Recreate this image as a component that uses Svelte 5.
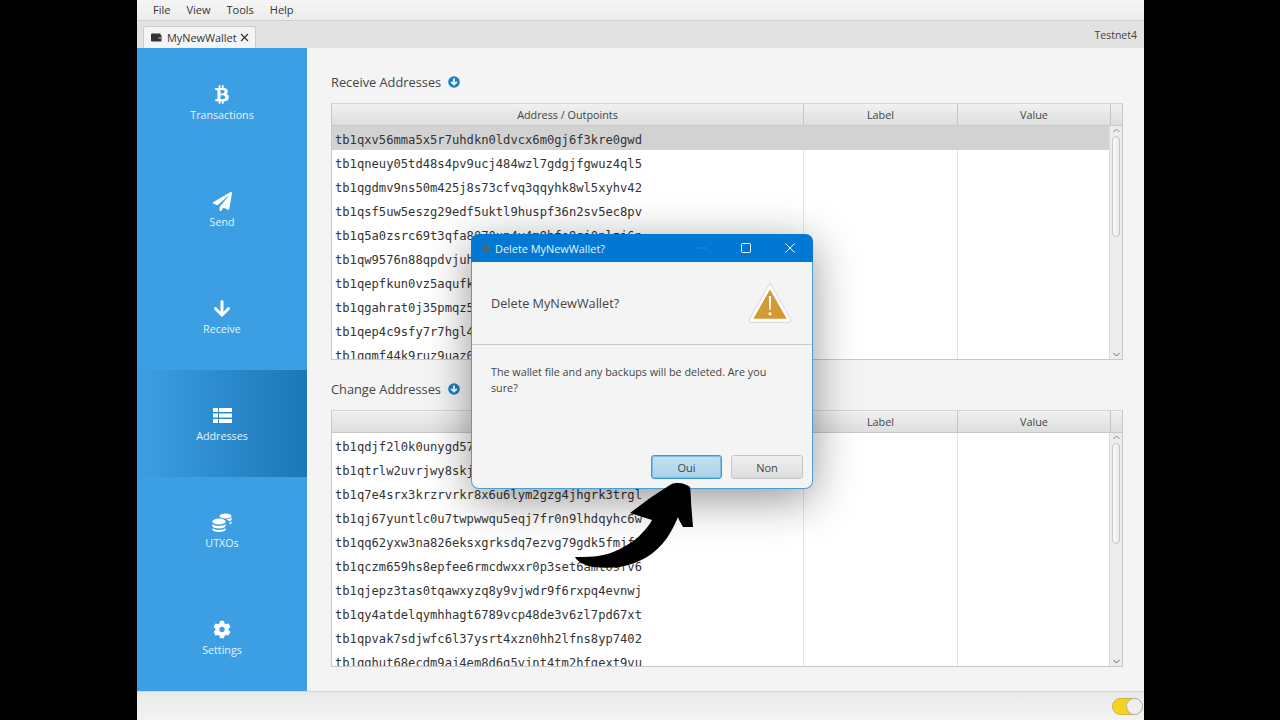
<script lang="ts">
  const menus = ['File', 'View', 'Tools', 'Help'];

  const btc = 'M310.204 242.638c27.73-14.18 45.377-39.39 41.28-81.3-5.358-57.351-52.458-76.573-114.85-81.929V0h-48.528v77.203c-12.605 0-25.525.315-38.444.63V0h-48.528v79.409c-17.842.539-38.622.276-97.37 0v51.678c38.314-.678 58.417-3.14 63.023 21.427v217.429c-2.925 19.492-18.524 16.685-53.255 16.071L3.765 443.68c88.481 0 97.37.315 97.37.315V512h48.528v-67.06c13.234.315 26.154.315 38.444.315V512h48.528v-68.005c81.299-4.412 135.647-24.894 142.895-101.467 5.671-61.446-23.32-88.862-69.326-99.89zM150.608 134.553c27.415 0 113.126-8.507 113.126 48.528 0 54.515-85.71 48.212-113.126 48.212v-96.74zm0 251.776V279.821c32.772 0 133.127-9.138 133.127 53.255-.001 60.186-100.355 53.253-133.127 53.253z';
  const plane = 'M476 3.2L12.5 270.6c-18.1 10.4-15.8 35.6 2.2 43.2L121 358.4l287.3-253.2c5.5-4.9 13.3 2.6 8.6 8.3L176 407v80.5c0 23.6 28.5 32.9 42.5 15.8L282 426l124.6 52.2c14.2 6 30.4-2.9 33-18.2l72-432C515 7.8 493.3-6.8 476 3.2z';
  const down = 'M413.1 222.5l22.2 22.2c9.4 9.4 9.4 24.6 0 33.9L241 473c-9.4 9.4-24.6 9.4-33.9 0L12.7 278.6c-9.4-9.4-9.4-24.6 0-33.9l22.2-22.2c9.5-9.5 25-9.3 34.3.4L184 343.4V56c0-13.3 10.7-24 24-24h32c13.3 0 24 10.7 24 24v287.4l114.8-120.5c9.3-9.8 24.8-10 34.3-.4z';
  const cog = 'M487.4 315.7l-42.6-24.6c4.3-23.2 4.3-47 0-70.2l42.6-24.6c4.9-2.8 7.1-8.6 5.5-14-11.1-35.6-30-67.8-54.7-94.6-3.8-4.1-10-5.1-14.8-2.3L380.8 110c-17.9-15.4-38.5-27.3-60.8-35.1V25.8c0-5.6-3.9-10.5-9.4-11.7-36.7-8.2-74.3-7.8-109.2 0-5.5 1.2-9.4 6.1-9.4 11.7V75c-22.2 7.9-42.8 19.8-60.8 35.1L88.7 85.5c-4.9-2.8-11-1.9-14.8 2.3-24.7 26.7-43.6 58.9-54.7 94.6-1.7 5.4.6 11.2 5.5 14L67.3 221c-4.3 23.2-4.3 47 0 70.2l-42.6 24.6c-4.9 2.8-7.1 8.6-5.5 14 11.1 35.6 30 67.8 54.7 94.6 3.8 4.1 10 5.1 14.8 2.3l42.6-24.6c17.9 15.4 38.5 27.3 60.8 35.1v49.2c0 5.6 3.9 10.5 9.4 11.7 36.7 8.2 74.3 7.8 109.2 0 5.5-1.2 9.4-6.1 9.4-11.7v-49.2c22.2-7.9 42.8-19.8 60.8-35.1l42.6 24.6c4.9 2.8 11 1.9 14.8-2.3 24.7-26.7 43.6-58.9 54.7-94.6 1.5-5.5-.7-11.3-5.6-14.1zM256 336c-44.1 0-80-35.9-80-80s35.9-80 80-80 80 35.9 80 80-35.9 80-80 80z';

  const nav = [
    { label: 'Transactions', icon: 'btc' },
    { label: 'Send', icon: 'send' },
    { label: 'Receive', icon: 'receive' },
    { label: 'Addresses', icon: 'addresses', active: true },
    { label: 'UTXOs', icon: 'utxos' },
    { label: 'Settings', icon: 'settings' }
  ];

  const receive = [
    'tb1qxv56mma5x5r7uhdkn0ldvcx6m0gj6f3kre0gwd',
    'tb1qneuy05td48s4pv9ucj484wzl7gdgjfgwuz4ql5',
    'tb1qgdmv9ns50m425j8s73cfvq3qqyhk8wl5xyhv42',
    'tb1qsf5uw5eszg29edf5uktl9huspf36n2sv5ec8pv',
    'tb1q5a0zsrc69t3qfa8070un4v4m9hfe9qj0nlzj6n',
    'tb1qw9576n88qpdvjuh3k7s2ld0xm4tq8ye5rfa6gc',
    'tb1qepfkun0vz5aqufk7h3wd9xs2ml4cj8ty6rn0pe',
    'tb1qgahrat0j35pmqz5v8dk2xw7fy4ls9nc6ue3t0h',
    'tb1qep4c9sfy7r7hgl4m2xa5dk8vz0tn3wuj6qs9ry',
    'tb1qgmf44k9ruz9uaz0c7xd3pl5wt8hn2vy6es4jfk'
  ];

  const change = [
    'tb1qdjf2l0k0unygd57x3hr8cw5m9ta2ep4vsz6qnl',
    'tb1qtrlw2uvrjwy8skj4d7fn0xa3m5hc9ge6pt2yzq',
    'tb1q7e4srx3krzrvrkr8x6u6lym2gzg4jhgrk3trgl',
    'tb1qj67yuntlc0u7twpwwqu5eqj7fr0n9lhdqyhc6w',
    'tb1qq62yxw3na826eksxgrksdq7ezvg79gdk5fmjf2',
    'tb1qczm659hs8epfee6rmcdwxxr0p3set6amt09fv6',
    'tb1qjepz3tas0tqawxyzq8y9vjwdr9f6rxpq4evnwj',
    'tb1qy4atdelqymhhagt6789vcp48de3v6zl7pd67xt',
    'tb1qpvak7sdjwfc6l37ysrt4xzn0hh2lfns8yp7402',
    'tb1qghut68ecdm9aj4em8d6g5vjnt4tm2hfgext9vu'
  ];

  const sections = [
    { title: 'Receive Addresses', rows: receive, selected: 0 },
    { title: 'Change Addresses', rows: change, selected: -1 }
  ];
</script>

<div class="screen">
  <div class="window">
    <nav class="menubar">
      {#each menus as menu}
        <span>{menu}</span>
      {/each}
    </nav>

    <div class="tabbar">
      <div class="tab">
        <svg class="wallet" width="11" height="11" viewBox="0 0 11 11">
          <path d="M1 1.5h8.5v1.5h1v6.5h-9.5a1 1 0 0 1-1-1v-6a1 1 0 0 1 1-1z" fill="#333" />
          <rect x="7.500" y="5" width="3" height="2" fill="#888" />
        </svg>
        <span>MyNewWallet</span>
        <svg class="tab-close" width="9" height="9" viewBox="0 0 9 9">
          <path d="M1 1l7 7M8 1L1 8" stroke="#333" stroke-width="1.200" fill="none" />
        </svg>
      </div>
      <span class="network">Testnet4</span>
    </div>

    <div class="main">
      <aside class="sidebar">
        {#each nav as item}
          <div class="nav-item" class:active={item.active}>
            {#if item.icon === 'btc'}
              <svg width="14" height="18" viewBox="0 0 384 512"><path d={btc} fill="#fff" /></svg>
            {:else if item.icon === 'send'}
              <svg width="19" height="19" viewBox="0 0 512 512"><path d={plane} fill="#fff" /></svg>
            {:else if item.icon === 'receive'}
              <svg width="18" height="18" viewBox="0 0 448 512"><path d={down} fill="#fff" /></svg>
            {:else if item.icon === 'addresses'}
              <svg width="19" height="18" viewBox="0 0 19 15">
                <path d="M0 0h5v4H0zM6 0h13v4H6zM0 5.5h5v4H0zM6 5.5h13v4H6zM0 11h5v4H0zM6 11h13v4H6z" fill="#fff" />
              </svg>
            {:else if item.icon === 'utxos'}
              <svg width="20" height="19" viewBox="0 0 20 19">
                <g fill="#fff">
                  <ellipse cx="13.500" cy="3" rx="6" ry="2.500" />
                  <path d="M14 6.2c2.5 0 4.5-.6 5.6-1.6v1.8c0 .8-1 1.5-2.6 1.9-.5-1-1.6-1.7-3-2.1zM17.6 9.5c1-.4 1.9-.9 2-1.5v1.8c0 .6-.8 1.2-2 1.6z" />
                  <ellipse cx="7" cy="8.500" rx="6.600" ry="3" />
                  <path d="M.4 11c1 1.2 3.600 2 6.600 2s5.600-.8 6.600-2v2c0 1.200-3 2.400-6.600 2.400S.4 14.200.4 13zM.4 15c1 1.200 3.600 2 6.600 2s5.600-.8 6.600-2v1.500C13.600 17.800 10.600 19 7 19S.4 17.800.4 16.500z" />
                </g>
              </svg>
            {:else}
              <svg width="18" height="18" viewBox="0 0 512 512"><path d={cog} fill="#fff" /></svg>
            {/if}
            <span>{item.label}</span>
          </div>
        {/each}
      </aside>

      <section class="content">
        {#each sections as section}
          <div class="section">
            <h2>
              {section.title}
              <svg width="12" height="12" viewBox="0 0 12 12">
                <circle cx="6" cy="6" r="5.800" fill="#1b7fcc" />
                <path d="M6 2.500v6M3.200 5.800L6 8.600l2.800-2.800" stroke="#fff" stroke-width="1.800" fill="none" />
              </svg>
            </h2>
            <div class="table">
              <div class="thead">
                <div>Address / Outpoints</div>
                <div>Label</div>
                <div>Value</div>
                <div></div>
              </div>
              <div class="tbody">
                <div class="rows">
                  {#each section.rows as row, i}
                    <div class="row" class:selected={i === section.selected}>
                      <div class="addr">{row}</div>
                      <div></div>
                      <div></div>
                    </div>
                  {/each}
                </div>
                <div class="scrollbar">
                  <svg width="13" height="10" viewBox="0 0 13 10"><path d="M3.500 6l3-3 3 3" stroke="#8a8a8a" fill="none" /></svg>
                  <div class="track"><div class="thumb"></div></div>
                  <svg width="13" height="10" viewBox="0 0 13 10"><path d="M3.500 4l3 3 3-3" stroke="#666" fill="none" /></svg>
                </div>
              </div>
            </div>
          </div>
        {/each}
      </section>
    </div>

    <footer class="statusbar">
      <div class="toggle"><div class="knob"></div></div>
    </footer>
  </div>

  <div class="dialog">
    <header class="dialog-title">
      <svg width="12" height="13" viewBox="0 0 14 14">
        <path d="M1 2l4 2.500L6.500 1 8 5l5-1-3 3.500L11.500 11 8 9.500 6 13.500 5 9 2 10l2-3.500z" fill="#56656f" />
      </svg>
      <span>Delete MyNewWallet?</span>
      <div class="controls">
        <svg width="12" height="12" viewBox="0 0 12 12"><path d="M1 6h10" stroke="#2a8bd8" /></svg>
        <svg width="12" height="12" viewBox="0 0 12 12"><rect x="1.500" y="1.500" width="9" height="9" rx="1" stroke="#fff" fill="none" /></svg>
        <svg width="12" height="12" viewBox="0 0 12 12"><path d="M1.500 1.500l9 9M10.500 1.500l-9 9" stroke="#fff" fill="none" /></svg>
      </div>
    </header>
    <div class="dialog-head">
      <span>Delete MyNewWallet?</span>
      <svg width="44" height="42" viewBox="0 0 44 42">
        <path d="M22 4L40.500 36.500a1.500 1.500 0 0 1-1.300 2H4.800a1.500 1.500 0 0 1-1.300-2z" fill="#d39a33" stroke="#fff" stroke-width="3.500" stroke-linejoin="round" />
        <path d="M22 1L42.500 37a2.200 2.200 0 0 1-2 3.400H3.500a2.200 2.200 0 0 1-2-3.400z" fill="none" stroke="#cfcfcf" stroke-width=".8" stroke-linejoin="round" />
        <path d="M20.800 14h2.400l-.5 14h-1.400zM20.700 30.500h2.600v2.800h-2.600z" fill="#fff" />
      </svg>
    </div>
    <div class="dialog-body">
      <p>The wallet file and any backups will be deleted. Are you sure?</p>
      <div class="buttons">
        <button class="oui">Oui</button>
        <button class="non">Non</button>
      </div>
    </div>
  </div>

  <svg class="arrow" width="130" height="90" viewBox="570 480 130 90">
    <path d="M575 557C585 557 595 557 603 555C613 553 620 549 627 545C634 541 639 537 643 532C647 528 650 524 652 520L630 513L650 498L670 485C673 483 676 483 678 483C683 483 687 485 690 487C691 495 691 500 691 502L693 527L683 527C681 524 679 520 678 517C675 524 671 532 667 538C662 545 655 552 647 557C638 562 630 565 620 567C611 568 602 568 593 567C587 566 583 564 580 562C578 561 576 559 575 557Z" fill="#000" />
  </svg>
</div>

<style>
  :global(body) {
    background: #000;
  }

  .screen {
    position: relative;
    display: flex;
    width: 1280px;
    height: 720px;
    padding: 0 136px 0 137px;
    box-sizing: border-box;
    background: #000;
    overflow: hidden;
    font-family: "Open Sans", "Noto Sans", sans-serif;
    color: #333;
  }

  .window {
    flex: 1;
    display: flex;
    flex-direction: column;
    background: #f4f4f4;
    min-width: 0;
  }

  .menubar {
    height: 21px;
    flex: none;
    display: flex;
    align-items: center;
    gap: 16px;
    padding: 0 0 2px 16px;
    box-sizing: border-box;
    font-size: 11px;
    background: linear-gradient(#f5f5f5, #ececec);
    border-bottom: 1px solid #cfcfcf;
  }

  .tabbar {
    height: 27px;
    flex: none;
    display: flex;
    align-items: flex-end;
    justify-content: space-between;
    padding: 0 7px 0 6px;
    box-sizing: border-box;
    background: #e2e2e2;
  }

  .tab {
    width: 113px;
    height: 22px;
    display: flex;
    align-items: center;
    gap: 5px;
    padding-left: 7px;
    box-sizing: border-box;
    font-size: 10.900px;
    background: #f4f4f4;
    border: 1px solid #cdcdcd;
    border-bottom: none;
    border-radius: 3px 3px 0 0;
  }

  .tab-close {
    margin-left: -2px;
  }

  .network {
    align-self: center;
    font-size: 10.500px;
    color: #444;
    margin-top: 1px;
  }

  .main {
    flex: 1;
    display: flex;
    min-height: 0;
  }

  .sidebar {
    width: 170px;
    flex: none;
    display: grid;
    grid-template-rows: repeat(6, 107px);
    padding-top: 1px;
    box-sizing: border-box;
    background: #3d9fe3;
  }

  .nav-item {
    display: flex;
    flex-direction: column;
    align-items: center;
    justify-content: flex-start;
    padding-top: 36px;
    gap: 4px;
    box-sizing: border-box;
    color: #e6f3fc;
    font-size: 10.700px;
  }

  .nav-item svg {
    height: 19px;
  }

  .nav-item.active {
    background: linear-gradient(to right, #3d9fe3, #1b77b7);
  }

  .content {
    flex: 1;
    min-width: 0;
    padding: 23px 21px 24px 24px;
    display: flex;
    flex-direction: column;
    gap: 18px;
  }

  .section {
    display: flex;
    flex-direction: column;
  }

  .section h2 {
    margin: 0 0 10px;
    height: 22px;
    display: flex;
    align-items: center;
    gap: 7px;
    font-size: 12.800px;
    font-weight: 400;
    color: #444;
  }

  .table {
    height: 257px;
    display: flex;
    flex-direction: column;
    border: 1px solid #c8c8c8;
    border-top-color: #d4d4d4;
    box-sizing: border-box;
    background: #fff;
  }

  .thead {
    height: 21px;
    flex: none;
    display: grid;
    grid-template-columns: 472px 154px 153px 1fr;
    background: linear-gradient(#f1f1f1, #dedede);
    border-bottom: 1px solid #c8c8c8;
    font-size: 10.800px;
    color: #444;
  }

  .thead div {
    display: flex;
    align-items: center;
    justify-content: center;
    border-right: 1px solid #c4c4c4;
  }

  .thead div:last-child {
    border-right: none;
  }

  .tbody {
    flex: 1;
    min-height: 0;
    display: flex;
  }

  .rows {
    flex: 1;
    min-width: 0;
    overflow: hidden;
  }

  .row {
    height: 24px;
    display: grid;
    grid-template-columns: 472px 154px 1fr;
    grid-template-rows: 24px;
  }

  .row div {
    border-right: 1px solid #e4e4e4;
  }

  .row div:last-child {
    border-right: none;
  }

  .row.selected {
    background: #d2d2d2;
  }

  .row.selected div {
    border-right-color: transparent;
  }

  .addr {
    padding: 2px 0 0 3px;
    box-sizing: border-box;
    font-family: "DejaVu Sans Mono", "Liberation Mono", monospace;
    font-size: 12.150px;
    line-height: 24px;
    white-space: nowrap;
    overflow: hidden;
    color: #333;
  }

  .scrollbar {
    width: 13px;
    flex: none;
    display: flex;
    flex-direction: column;
    background: #ececec;
    border-left: 1px solid #dcdcdc;
    box-sizing: border-box;
  }

  .track {
    flex: 1;
    padding: 0 2px;
  }

  .thumb {
    height: 101px;
    background: linear-gradient(to right, #fafafa, #e9e9e9);
    border: 1px solid #c6c6c6;
    border-radius: 4px;
    box-sizing: border-box;
  }

  .statusbar {
    height: 29px;
    flex: none;
    display: flex;
    align-items: center;
    justify-content: flex-end;
    background: linear-gradient(#e9e9e9, #f3f3f3);
    border-top: 1px solid #d6d6d6;
    box-sizing: border-box;
  }

  .toggle {
    width: 31px;
    height: 17px;
    margin-right: 1px;
    border-radius: 9px;
    background: #f5d320;
    border: 1px solid #cdb23a;
    box-sizing: border-box;
    display: flex;
    justify-content: flex-end;
  }

  .knob {
    width: 15px;
    height: 15px;
    border-radius: 50%;
    background: #efefef;
    box-shadow: 0 0 0 1px #b8b8b8;
  }

  .dialog {
    position: absolute;
    left: 471px;
    top: 234px;
    width: 342px;
    height: 255px;
    display: flex;
    flex-direction: column;
    box-sizing: border-box;
    border: 1px solid #4b9dd4;
    border-top: none;
    border-radius: 8px;
    background: #f4f4f4;
    box-shadow: 0 10px 45px rgba(0, 0, 0, 0.42);
  }

  .dialog-title {
    height: 28px;
    flex: none;
    margin: 0 -1px;
    display: flex;
    align-items: center;
    gap: 3px;
    padding-left: 9px;
    background: #0078d4;
    border-radius: 8px 8px 0 0;
    color: #eaf4fb;
    font-size: 10.900px;
  }

  .controls {
    margin-left: auto;
    display: flex;
    gap: 32px;
    padding-right: 17px;
  }

  .dialog-head {
    height: 83px;
    flex: none;
    display: flex;
    align-items: center;
    justify-content: space-between;
    padding: 0 20px 0 19px;
    box-sizing: border-box;
    border-bottom: 1px solid #c9c9c9;
    font-size: 12.700px;
    color: #444;
  }

  .dialog-body {
    flex: 1;
    display: flex;
    flex-direction: column;
    justify-content: space-between;
    padding: 19px 9px 9px 19px;
  }

  .dialog-body p {
    margin: 0;
    width: 290px;
    font-size: 10.750px;
    line-height: 16px;
    color: #444;
  }

  .buttons {
    display: flex;
    justify-content: flex-end;
    gap: 9px;
  }

  .buttons button {
    width: 72px;
    height: 24px;
    padding: 0;
    font: inherit;
    font-size: 11px;
    color: #444;
    border-radius: 3px;
  }

  .buttons .oui {
    width: 71px;
    background: linear-gradient(#c4e1f2, #a8d3eb);
    border: 1px solid #3c9ad2;
    box-shadow: inset 0 0 0 1px #7dbfe3;
  }

  .non {
    background: linear-gradient(#f0f0f0, #dcdcdc);
    border: 1px solid #c4c4c4;
  }

  .arrow {
    position: absolute;
    left: 570px;
    top: 480px;
  }
</style>
